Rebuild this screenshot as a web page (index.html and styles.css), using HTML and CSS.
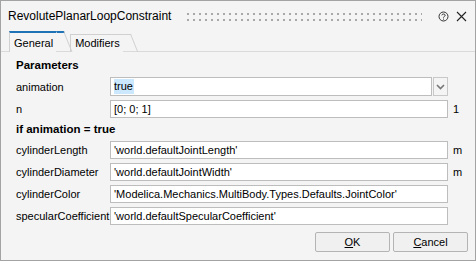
FILE: index.html
```html
<html>
	<head>
		<link rel="stylesheet" href="styles.css">
	</head>
	<body>
		<div class="window">
			<div class="titlebar">
				<span class="title">RevolutePlanarLoopConstraint</span>
				<div class="grip"></div>
				<svg class="icon" width="11" height="11" viewBox="0 0 11 11">
					<circle cx="5.5" cy="5.5" r="4.5" fill="none" stroke="#333" stroke-width="1"/>
					<path d="M3.8 4.3 C3.8 2.6 7.2 2.6 7.2 4.3 C7.2 5.5 5.5 5.4 5.5 6.6" fill="none" stroke="#333" stroke-width="1"/>
					<rect x="5" y="7.6" width="1" height="1" fill="#333"/>
				</svg>
				<svg class="icon close" width="11" height="11" viewBox="0 0 11 11">
					<path d="M1 1 L10 10 M10 1 L1 10" stroke="#222" stroke-width="1.1"/>
				</svg>
			</div>
			<div class="tabs">
				<div class="tab active">General</div>
				<div class="tab">Modifiers</div>
			</div>
			<div class="panel">
				<div class="group">Parameters</div>
				<label>animation</label>
				<div class="combo">
					<div class="field"><span class="sel">true</span></div>
					<div class="drop">
						<svg width="9" height="6" viewBox="0 0 9 6"><path d="M1 1 L4.5 4.5 L8 1" fill="none" stroke="#777" stroke-width="1.6"/></svg>
					</div>
				</div>
				<span class="unit"></span>

				<label>n</label>
				<div class="field">[0; 0; 1]</div>
				<span class="unit">1</span>

				<div class="group">if animation = true</div>
				<label>cylinderLength</label>
				<div class="field">'world.defaultJointLength'</div>
				<span class="unit">m</span>

				<label>cylinderDiameter</label>
				<div class="field">'world.defaultJointWidth'</div>
				<span class="unit">m</span>

				<label>cylinderColor</label>
				<div class="field">'Modelica.Mechanics.MultiBody.Types.Defaults.JointColor'</div>
				<span class="unit"></span>

				<label>specularCoefficient</label>
				<div class="field">'world.defaultSpecularCoefficient'</div>
				<span class="unit"></span>
			</div>
			<div class="buttons">
				<button><u>O</u>K</button>
				<button><u>C</u>ancel</button>
			</div>
		</div>
	</body>
</html>
```

FILE: styles.css
```css
body {
	margin: 0;
	background-color: #f4f4f4;
	font-family: "Liberation Sans", Arial, sans-serif;
	font-size: 11px;
	color: #000;
}
.window {
	width: 476px;
	height: 261px;
	box-sizing: border-box;
	border: 1px solid #a3a3a3;
	display: flex;
	flex-direction: column;
	overflow: hidden;
}
.titlebar {
	height: 30px;
	display: flex;
	align-items: center;
	padding: 0 8px 0 7px;
}
.title {
	font-size: 12px;
}
.grip {
	flex: 1;
	height: 8px;
	margin: 1px 10px 0 16px;
	background-image: radial-gradient(circle at 1px 1px, #a8a8a8 0.9px, transparent 1.1px);
	background-size: 6px 6px;
}
.icon {
	margin-left: 6px;
}
.close {
	margin-left: 7px;
}
.tabs {
	height: 20px;
	display: flex;
	align-items: flex-end;
	padding-left: 8px;
	border-bottom: 1px solid #dadada;
}
.tab {
	position: relative;
	height: 17px;
	line-height: 17px;
	padding: 0 3px 0 4px;
	margin-right: 14px;
	border-left: 1px solid #d0d0d0;
	border-top: 1px solid #d0d0d0;
	margin-bottom: -1px;
	background-color: #f4f4f4;
}
.tab::after {
	content: "";
	position: absolute;
	top: -1px;
	right: -8px;
	width: 8px;
	height: 18px;
	border-top: 1px solid #d0d0d0;
	border-right: 1px solid #d0d0d0;
	transform: skewX(22deg);
	transform-origin: top left;
	box-sizing: border-box;
}
.tab.active {
	height: 19px;
	line-height: 20px;
	border-top: 2px solid #1f72b5;
	z-index: 1;
}
.tab.active::after {
	top: -2px;
	height: 21px;
	border-top: 2px solid #1f72b5;
}
.panel {
	display: grid;
	grid-template-columns: 94px 338px auto;
	row-gap: 4px;
	padding: 6px 0 0 15px;
	align-items: center;
}
.group {
	grid-column: 1 / 4;
	font-weight: bold;
	font-size: 11.5px;
	height: 15px;
	line-height: 15px;
}
label {
	white-space: nowrap;
}
.field {
	height: 18px;
	box-sizing: border-box;
	border: 1px solid #bdbdbd;
	background-color: #fff;
	padding: 0 3px;
	line-height: 16px;
	white-space: nowrap;
	overflow: hidden;
}
.combo {
	display: flex;
	height: 19px;
}
.combo .field {
	flex: 1;
	height: 19px;
	line-height: 17px;
}
.sel {
	background-color: #cce8ff;
	padding: 1px 1px 2px 0;
}
.drop {
	width: 15px;
	margin-left: 1px;
	box-sizing: border-box;
	border: 1px solid #c8c8c8;
	display: flex;
	align-items: center;
	justify-content: center;
}
.unit {
	padding-left: 5px;
}
.buttons {
	margin-top: auto;
	display: flex;
	justify-content: flex-end;
	gap: 3px;
	padding: 0 7px 8px 0;
}
button {
	width: 75px;
	height: 20px;
	font-family: "Liberation Sans", Arial, sans-serif;
	font-size: 11px;
	color: #000;
	background-color: #f0f0f0;
	border: 1px solid #b4b4b4;
	border-radius: 2px;
	padding: 0;
}
```
